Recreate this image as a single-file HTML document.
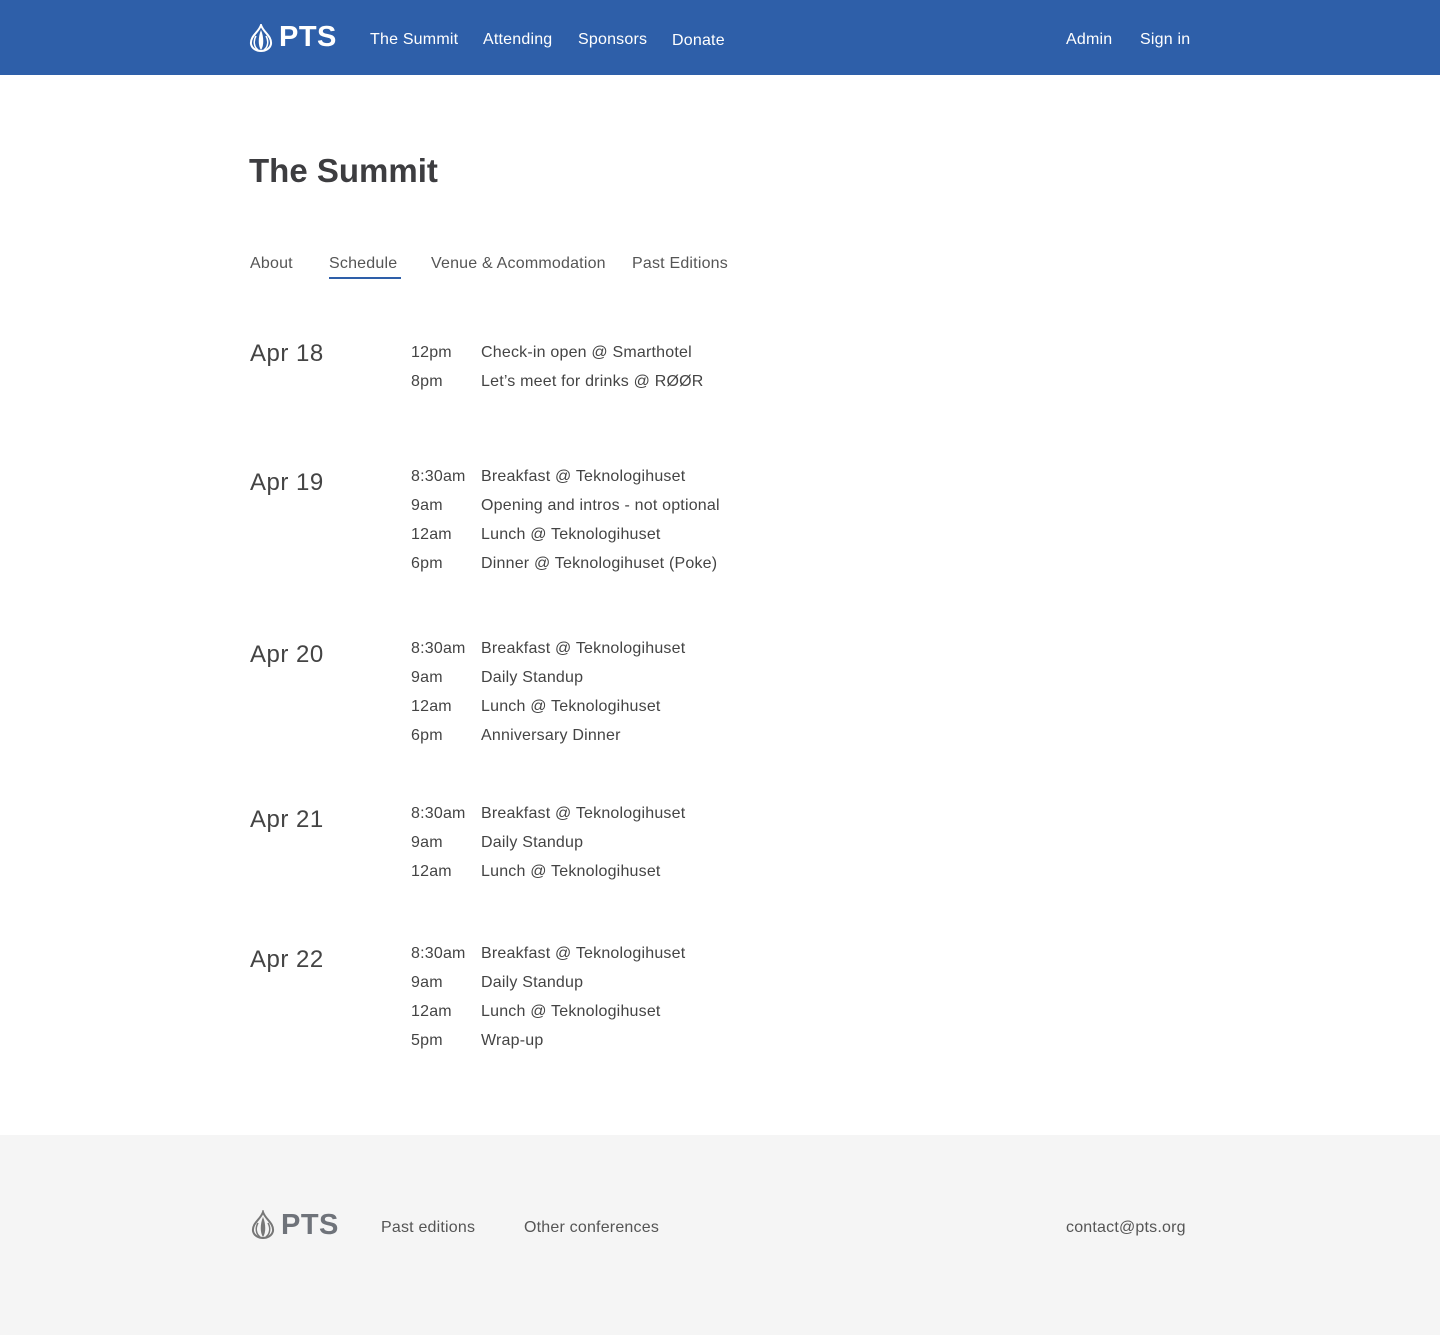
<!DOCTYPE html>
<html><head><meta charset="utf-8"><style>
*{margin:0;padding:0;box-sizing:border-box}
body{width:1440px;height:1335px;font-family:"Liberation Sans",sans-serif;color:#444;background:#fff;position:relative;overflow:hidden;letter-spacing:0.2px}
.nav{height:75px;background:#2e5fa9;position:relative;color:#fff;font-size:16px}
.a{position:absolute;white-space:nowrap}
.logo{font-weight:bold;font-size:29px;letter-spacing:0.5px}
h1{position:absolute;left:249px;top:152px;font-size:33px;font-weight:bold;color:#3d3d40;letter-spacing:0}
.tab{position:absolute;top:255px;font-size:16px;color:#555}
.ul{position:absolute;left:329px;top:277px;width:72px;height:2px;background:#2e5fa9}
.d{position:absolute;left:250px;font-size:24px;color:#444;letter-spacing:0.5px}
.t{position:absolute;left:411px;font-size:16px;color:#444}
.e{position:absolute;left:481px;font-size:16px;color:#444}
.foot{position:absolute;left:0;top:1135px;width:1440px;height:200px;background:#f5f5f5;color:#555;font-size:16px}
</style></head><body>
<div class="nav">
<svg class="a" style="left:249px;top:24px" width="24" height="28" viewBox="0 0 24 28"><path d="M12 1 C10 8 1 12 2 20 C3 25 8 27 12 27 C16 27 21 25 22 20 C23 12 14 8 12 1Z" fill="none" stroke="#fff" stroke-width="2"/><path d="M12 6 C9 13 9 22 12 26 C15 22 15 13 12 6Z" fill="#fff"/><path d="M7 12 C4 17 5 23 9 26 M17 12 C20 17 19 23 15 26" fill="none" stroke="#fff" stroke-width="1.5"/></svg>
<div class="a logo" style="left:279px;top:21px">PTS</div>
<div class="a" style="left:370px;top:31px">The Summit</div>
<div class="a" style="left:483px;top:31px">Attending</div>
<div class="a" style="left:578px;top:31px">Sponsors</div>
<div class="a" style="left:672px;top:32px">Donate</div>
<div class="a" style="left:1066px;top:31px">Admin</div>
<div class="a" style="left:1140px;top:31px">Sign in</div>
</div>
<h1>The Summit</h1>
<div class="tab" style="left:250px">About</div>
<div class="tab" style="left:329px">Schedule</div>
<div class="tab" style="left:431px">Venue &amp; Acommodation</div>
<div class="tab" style="left:632px">Past Editions</div>
<div class="ul"></div>

<div class="d" style="top:340px">Apr 18</div>
<div class="t" style="top:344px">12pm</div><div class="e" style="top:344px">Check-in open @ Smarthotel</div>
<div class="t" style="top:373px">8pm</div><div class="e" style="top:373px">Let’s meet for drinks @ RØØR</div>

<div class="d" style="top:469px">Apr 19</div>
<div class="t" style="top:468px">8:30am</div><div class="e" style="top:468px">Breakfast @ Teknologihuset</div>
<div class="t" style="top:497px">9am</div><div class="e" style="top:497px">Opening and intros - not optional</div>
<div class="t" style="top:526px">12am</div><div class="e" style="top:526px">Lunch @ Teknologihuset</div>
<div class="t" style="top:555px">6pm</div><div class="e" style="top:555px">Dinner @ Teknologihuset (Poke)</div>

<div class="d" style="top:641px">Apr 20</div>
<div class="t" style="top:640px">8:30am</div><div class="e" style="top:640px">Breakfast @ Teknologihuset</div>
<div class="t" style="top:669px">9am</div><div class="e" style="top:669px">Daily Standup</div>
<div class="t" style="top:698px">12am</div><div class="e" style="top:698px">Lunch @ Teknologihuset</div>
<div class="t" style="top:727px">6pm</div><div class="e" style="top:727px">Anniversary Dinner</div>

<div class="d" style="top:806px">Apr 21</div>
<div class="t" style="top:805px">8:30am</div><div class="e" style="top:805px">Breakfast @ Teknologihuset</div>
<div class="t" style="top:834px">9am</div><div class="e" style="top:834px">Daily Standup</div>
<div class="t" style="top:863px">12am</div><div class="e" style="top:863px">Lunch @ Teknologihuset</div>

<div class="d" style="top:946px">Apr 22</div>
<div class="t" style="top:945px">8:30am</div><div class="e" style="top:945px">Breakfast @ Teknologihuset</div>
<div class="t" style="top:974px">9am</div><div class="e" style="top:974px">Daily Standup</div>
<div class="t" style="top:1003px">12am</div><div class="e" style="top:1003px">Lunch @ Teknologihuset</div>
<div class="t" style="top:1032px">5pm</div><div class="e" style="top:1032px">Wrap-up</div>

<div class="foot">
<svg class="a" style="left:251px;top:75px" width="24" height="30" viewBox="0 0 24 28"><path d="M12 1 C10 8 1 12 2 20 C3 25 8 27 12 27 C16 27 21 25 22 20 C23 12 14 8 12 1Z" fill="none" stroke="#777" stroke-width="2"/><path d="M12 6 C9 13 9 22 12 26 C15 22 15 13 12 6Z" fill="#777"/><path d="M7 12 C4 17 5 23 9 26 M17 12 C20 17 19 23 15 26" fill="none" stroke="#777" stroke-width="1.5"/></svg>
<div class="a logo" style="left:281px;top:74px;color:#6f737a">PTS</div>
<div class="a" style="left:381px;top:84px">Past editions</div>
<div class="a" style="left:524px;top:84px">Other conferences</div>
<div class="a" style="left:1066px;top:84px">contact@pts.org</div>
</div>
</body></html>
